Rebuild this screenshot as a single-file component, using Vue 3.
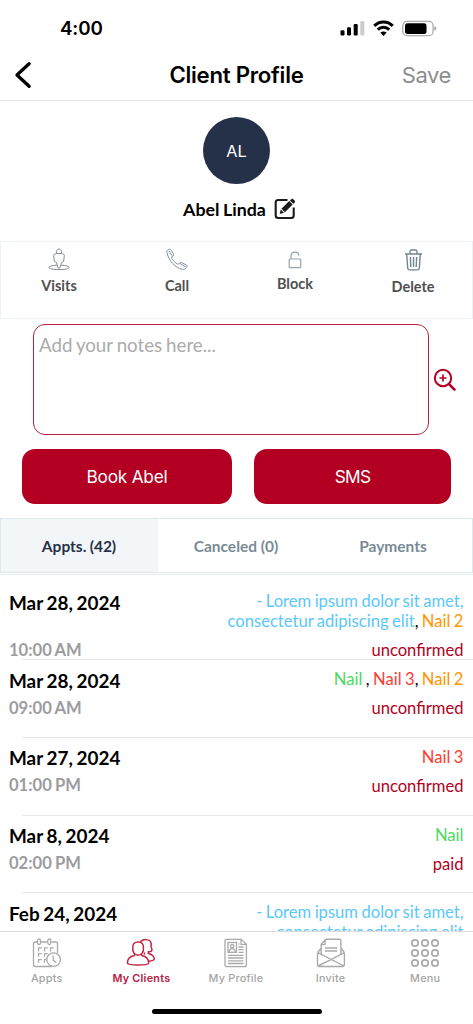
<script setup>
const appointments = [
  {
    date: 'Mar 28, 2024', time: '10:00 AM', status: 'unconfirmed', tall: true,
    services: [
      { name: '- Lorem ipsum dolor sit amet, consectetur adipiscing elit', tone: 'blue', sep: ', ' },
      { name: 'Nail 2', tone: 'orange', sep: '' }
    ]
  },
  {
    date: 'Mar 28, 2024', time: '09:00 AM', status: 'unconfirmed',
    services: [
      { name: 'Nail', tone: 'green', sep: ' , ' },
      { name: 'Nail 3', tone: 'red', sep: ', ' },
      { name: 'Nail 2', tone: 'orange', sep: '' }
    ]
  },
  { date: 'Mar 27, 2024', time: '01:00 PM', status: 'unconfirmed', services: [{ name: 'Nail 3', tone: 'red', sep: '' }] },
  { date: 'Mar 8, 2024', time: '02:00 PM', status: 'paid', services: [{ name: 'Nail', tone: 'green', sep: '' }] },
  {
    date: 'Feb 24, 2024', time: '', status: '', tall: true,
    services: [{ name: '- Lorem ipsum dolor sit amet, consectetur adipiscing elit', tone: 'blue', sep: '' }]
  }
]
const dots = [5, 15, 25]
</script>

<template>
  <div class="phone">
    <header class="status">
      <span class="clock">4:00</span>
      <svg class="status-icons" width="100" height="20" viewBox="0 0 100 20">
        <rect x="1.500" y="11.200" width="4" height="5.300" rx="1.200" />
        <rect x="8" y="8.300" width="4" height="8.200" rx="1.200" />
        <rect x="14.700" y="5" width="4" height="11.500" rx="1.200" />
        <rect x="21.300" y="2" width="4" height="14.500" rx="1.200" fill="#ccc" />
        <g fill="none" stroke="#000" stroke-width="3.100">
          <path d="M35.300 6.800c5.200-5.100 13.200-5.100 18.400 0" />
          <path d="M38.700 10.700c3.400-3.200 8.200-3.200 11.600 0" />
        </g>
        <path d="M41.300 13.600c1.800-1.600 4.600-1.600 6.400 0L44.500 16.900z" />
        <rect x="63.800" y="2.300" width="30.300" height="14.500" rx="4.500" fill="none" stroke="#999" stroke-width="1.100" />
        <rect x="66" y="4.200" width="21.500" height="10.700" rx="2.500" />
        <path d="M95.500 7v4.700c1-.5 1.800-1.300 1.800-2.300S96.500 7.500 95.500 7z" fill="#999" />
      </svg>
    </header>

    <nav class="nav">
      <svg class="back" width="18" height="28" viewBox="0 0 18 28"><path d="M15.100 2.700 3 14l12.100 11.300" fill="none" stroke="#000" stroke-width="3.300" stroke-linecap="round" stroke-linejoin="round" /></svg>
      <h1>Client Profile</h1>
      <span class="save">Save</span>
    </nav>

    <section class="profile">
      <div class="avatar">AL</div>
      <div class="name">
        <span>Abel Linda</span>
        <svg width="22" height="22" viewBox="0 0 22 22">
          <path d="M13.500 2H4.200A2.500 2.500 0 0 0 1.700 4.500v13A2.500 2.500 0 0 0 4.200 20h13a2.500 2.500 0 0 0 2.500-2.500V9.500" fill="none" stroke="#1b1b1b" stroke-width="2.100" />
          <path d="M17.300 1.200c.6-.6 1.300-.6 1.900 0l1.400 1.400c.6.6.6 1.300 0 1.900l-1.300 1.300-3.400-3.300zM15.200 3.100l3.500 3.500-7.800 7.600-3.500-3.400zM6.700 11.500l3.300 3.300-4.300 1.100z" fill="#1b1b1b" />
        </svg>
      </div>
    </section>

    <section class="actions">
      <div class="action">
        <svg width="22" height="23" viewBox="0 0 22 23" fill="none" stroke="#858b9b" stroke-width="1">
          <path d="M8.700 5.500C7.800 3 8.900 1 11 1s3.200 2 2.300 4.500M8.700 5.500c-2.300.3-3.100 1-3 2.300l.7 5.700 1.900.9L10.200 20h1.600l1.900-5.600 1.900-.9.700-5.700c.1-1.300-.7-2-3-2.300z" />
          <path d="M8.800 17.200C3.800 17.500.8 18.400.8 19.400c0 1.300 4.500 2.200 10.200 2.200s10.200-.9 10.200-2.200c0-1-3-1.900-8-2.200" />
        </svg>
        <span>Visits</span>
      </div>
      <div class="action">
        <svg width="22" height="23" viewBox="0 0 22 23" fill="none" stroke="#83939e" stroke-width="1">
          <path d="M1 5C.3 3.300 1.200 2 2.900 1.400 4.200.9 4.800 1.400 5.400 2.500l2 3.700c.6 1.200.2 1.800-1.200 2.700-.7.500-.8 1.100-.3 1.900 1.300 2.100 3 3.800 5.100 5.100.8.500 1.500.4 2-.4.8-1.200 1.600-1.500 2.700-.9l4.300 2.200c1.200.6 1.400 1.300.7 2.500-1 1.800-2.500 2.500-4.500 2C8.900 19.600 3.200 13.200 1 5z" />
          <path d="m3 3.100 3.300 5.200M13.700 15.500l5.900 3.300" stroke-width="1.400" stroke-dasharray="1.200 .6" />
        </svg>
        <span>Call</span>
      </div>
      <div class="action block">
        <svg width="14" height="18" viewBox="0 0 14 18" fill="none" stroke="#97a5af" stroke-width="1.200">
          <rect x="1.200" y="8" width="11.500" height="8.600" rx=".7" />
          <path d="M3 8V5.100c0-5.100 7.600-5.300 8-.5" />
        </svg>
        <span>Block</span>
      </div>
      <div class="action delete">
        <svg width="19" height="22" viewBox="0 0 19 22" fill="none" stroke="#6f8590" stroke-width="1.400">
          <path d="M1 5h17M6 5V2.700C6 1.600 6.600 1 7.700 1h3.600c1.100 0 1.700.6 1.700 1.700V5M2.700 5l1 14c.1 1.300.8 1.900 2 1.900h7.600c1.200 0 1.900-.6 2-1.900l1-14M6.400 8l.4 10M9.500 8v10M12.600 8l-.4 10" />
        </svg>
        <span>Delete</span>
      </div>
    </section>

    <section class="notes">
      <div class="note-box">Add your notes here...</div>
      <svg width="24" height="24" viewBox="0 0 24 24" fill="none" stroke="#b30022">
        <circle cx="10" cy="10" r="8.200" stroke-width="2" />
        <path d="M6.500 10h7M10 6.500v7" stroke-width="1.700" />
        <path d="m16.300 16.300 5.200 5.300" stroke-width="2.600" stroke-linecap="round" />
      </svg>
    </section>

    <section class="buttons">
      <button class="book">Book Abel</button>
      <button class="sms">SMS</button>
    </section>

    <section class="tabs">
      <div class="tab active">Appts. (42)</div>
      <div class="tab">Canceled (0)</div>
      <div class="tab">Payments</div>
    </section>

    <main class="list">
      <article v-for="(a, i) in appointments" :key="i" class="row" :class="{ tall: a.tall }">
        <div class="left">
          <div class="date">{{ a.date }}</div>
          <div class="time">{{ a.time }}</div>
        </div>
        <div class="right">
          <div class="services"><template v-for="s in a.services" :key="s.name"><span :class="s.tone">{{ s.name }}</span>{{ s.sep }}</template></div>
          <div class="state">{{ a.status }}</div>
        </div>
      </article>
    </main>

    <footer class="bottom">
      <div class="items">
        <div class="item">
          <svg width="30" height="30" viewBox="0 0 30 30" fill="none" stroke="#aaa" stroke-width="1.300">
            <path d="M5 4H3.200C2.200 4 1.500 4.700 1.500 5.700v21.100c0 1 .7 1.700 1.700 1.700H20M9 4h6.500M19.500 4h4.300c1 0 1.700.7 1.700 1.700v9.500" />
            <rect x="5.500" y="1" width="3" height="5.500" rx="1.500" /><rect x="15.800" y="1" width="3" height="5.500" rx="1.500" />
            <path d="M6.500 13.500v-3.600h3.300M12.500 13.500v-3.600h3.300M18.500 13.500v-3.600h3.300M6.500 18.700v-3h3.300M12.500 18.700v-3h3.300M6.500 24.700v-3h3.300M12.500 24.700v-3h2" />
            <circle cx="21.600" cy="21.600" r="6.800" /><path d="M21.200 17.500v4.700l3 2.500" />
          </svg>
          <span>Appts</span>
        </div>
        <div class="item selected">
          <svg width="30" height="30" viewBox="0 0 30 30" fill="none" stroke="#c22745" stroke-width="1.500" stroke-linejoin="round">
            <path d="M6.800 10c-.4-4 1.600-6 5.300-6s5.700 2 5.300 6c.5 3.300-1.500 7.300-5.300 7.300S6.300 13.300 6.800 10zM8.700 16.100 8 17.700C3.500 18.300 1.600 20.800 1.400 25c0 1.300 5 2 10.600 2s10.700-.7 10.700-2c-.2-4.200-2.300-6.700-6.600-7.300l-.6-1.600" />
            <path d="M14.200 4.600c1.400-2.800 4.600-3.600 7.500-2.700 2.800.8 4 2.800 3.300 6.100-.1 1.500 1.100 2.600 1 4-.4 1.500-1.900 2-3.800 1.700l.2 1.800c4 .8 5.600 2.800 5.900 5.500.1 1-1.800 1.900-5.500 2.200M18.500 14.500l-.1 2.100" />
          </svg>
          <span>My Clients</span>
        </div>
        <div class="item">
          <svg width="30" height="30" viewBox="0 0 30 30" fill="none" stroke="#aaa" stroke-width="1.300">
            <path d="M4 3.200C4 2 4.700 1.300 5.900 1.300h14.500l5 5v20.400c0 1.200-.7 1.900-1.900 1.900H5.900c-1.200 0-1.900-.7-1.900-1.900zM20 1.500v4.900h5" />
            <rect x="7" y="4.500" width="8.500" height="9.800" /><circle cx="11.200" cy="8.200" r="1.700" /><path d="M8.200 14c0-4.600 6-4.600 6 0M17.500 6h1M17.500 9h5M17.500 11.700h5M17.500 14.300h5M7 17.300h15.500M7 20h15.500M7 22.800h15.500M7 25.500h15.500" />
          </svg>
          <span>My Profile</span>
        </div>
        <div class="item">
          <svg width="30" height="30" viewBox="0 0 30 30" fill="none" stroke="#aaa" stroke-width="1.400" stroke-linejoin="round">
            <path d="M1.500 14.500v12.300c0 1 .7 1.700 1.700 1.700h23.500c1 0 1.700-.7 1.700-1.700V14.500M1.700 14.700 28 28M28.300 14.700 15.500 21.300 2 28M5.200 10 1.800 14.500M25 10l3.300 4.500M5.200 16.300V6.300l4.500-5h13.600c1 0 1.600.6 1.600 1.600v13.400M5.400 6.600H9V1.800M9 10h12.200M9 13h12.200" />
          </svg>
          <span>Invite</span>
        </div>
        <div class="item">
          <svg width="30" height="30" viewBox="0 0 30 30" fill="none" stroke="#aaa" stroke-width="1.700">
            <template v-for="y in dots" :key="y"><circle v-for="x in dots" :key="x" :cx="x" :cy="y" r="3.200" /></template>
          </svg>
          <span>Menu</span>
        </div>
      </div>
      <div class="home"></div>
    </footer>
  </div>
</template>

<style>
body { background: #fff; }
</style>

<style scoped>
* { box-sizing: border-box; }
.phone { width: 473px; height: 1024px; display: flex; flex-direction: column; overflow: hidden; background: #fff; color: #000; font-family: Lato, sans-serif; }
svg { display: block; flex: none; }
.status { height: 50px; flex: none; display: flex; justify-content: space-between; padding: 18px 34px 0 60px; font: 600 18.800px/22px Inter, sans-serif; }
.clock { letter-spacing: -.15px; }
.status-icons { margin-top: 1px; }
.nav { height: 51px; flex: none; display: grid; grid-template-columns: 1fr auto 1fr; align-items: center; padding: 0 22px 0 14px; border-bottom: 1.500px solid #e6e6e6; font-family: Inter, sans-serif; }
.nav h1 { margin: -2px 0 0 8px; font-size: 22.200px; font-weight: 600; letter-spacing: -.25px; }
.save { justify-self: end; margin-top: -1px; font-size: 22px; letter-spacing: -.4px; color: #8d8d8d; }
.profile { height: 140px; flex: none; display: flex; flex-direction: column; align-items: center; padding-top: 16px; }
.avatar { width: 67px; height: 67px; flex: none; border-radius: 50%; background: #253148; color: #fff; display: flex; align-items: center; justify-content: center; font: 400 16.300px Inter, sans-serif; }
.name { display: flex; align-items: center; gap: 8px; margin: 14px 0 0 6px; font-size: 17.800px; font-weight: 700; line-height: 22px; word-spacing: -.8px; }
.actions { height: 78px; flex: none; display: grid; grid-template-columns: repeat(4, 118px); border: 1px solid #edf2f3; }
.action { display: flex; flex-direction: column; align-items: center; padding: 6px 2px 0 0; font-size: 14.500px; font-weight: 700; color: #505050; line-height: 18px; }
.action span { margin-top: 6px; }
.block { padding-top: 9px; }
.delete { padding-top: 7px; }
.delete span { margin-top: 7px; }
.notes { height: 121px; flex: none; display: flex; align-items: center; gap: 4px; padding: 0 0 0 33px; margin-bottom: 9px; }
.note-box { width: 396px; height: 111px; border: 1.500px solid #b9203f; border-radius: 12px; padding: 8px 5px; font-size: 18.700px; line-height: 24px; color: #ababab; word-spacing: -.8px; }
.buttons { height: 55px; flex: none; display: flex; gap: 22px; padding-left: 22px; }
.buttons button { height: 55px; border: 0; border-radius: 13px; background: #b30022; color: #fff; font: 400 17.300px Inter, sans-serif; letter-spacing: -.25px; }
.buttons .book { width: 210px; }
.buttons .sms { width: 197px; letter-spacing: -.7px; }
.tabs { height: 55px; flex: none; margin-top: 14px; display: grid; grid-template-columns: repeat(3, 1fr); border: 1px solid #dfe8ec; }
.tab { display: flex; align-items: center; justify-content: center; padding-right: 1px; font-size: 15.500px; font-weight: 700; color: #798b95; }
.tab.active { background: #f3f6f8; color: #253148; word-spacing: -.5px; }
.list { flex: 1; min-height: 0; overflow: hidden; margin-top: 1px; border-top: 1.500px solid #e4ecef; padding-top: 6px; }
.row { display: flex; justify-content: space-between; height: 77.800px; padding: 9px 9.500px 0 9px; position: relative; }
.row::after { content: ''; position: absolute; left: 22px; right: 0; bottom: -1px; border-bottom: 1px solid #e6e6e6; }
.row.tall { height: 78px; }
.left, .right { display: flex; flex-direction: column; }
.right { width: 260px; text-align: right; }
.date { margin-top: .5px; font-size: 18.900px; font-weight: 700; line-height: 24px; word-spacing: -.9px; }
.time { margin-top: 5px; font-size: 16.600px; font-weight: 700; line-height: 20px; color: #9c9ca0; word-spacing: -.7px; }
.services { font-size: 16.600px; line-height: 20px; padding-top: 1px; word-spacing: -.8px; }
.state { margin-top: 9px; font-size: 16.600px; line-height: 20px; color: #b30022; }
.tall .time { margin-top: 25px; }
.blue { color: #5ac8fa; }
.orange { color: #ff9500; }
.green { color: #4cd964; }
.red { color: #ff3b30; }
.bottom { height: 93px; flex: none; display: flex; flex-direction: column; align-items: center; border-top: 1px solid #dcdcdc; background: #fff; }
.items { align-self: stretch; display: grid; grid-template-columns: repeat(5, 1fr); height: 77px; }
.item { display: flex; flex-direction: column; align-items: center; padding: 6px 1px 0 0; font: 500 10.800px/14px Inter, sans-serif; color: #a5a5a5; }
.item span { margin-top: 4px; letter-spacing: .25px; }
.selected { color: #b9203f; font-weight: 600; }
.home { width: 170px; height: 5px; border-radius: 3px; background: #000; }
</style>
